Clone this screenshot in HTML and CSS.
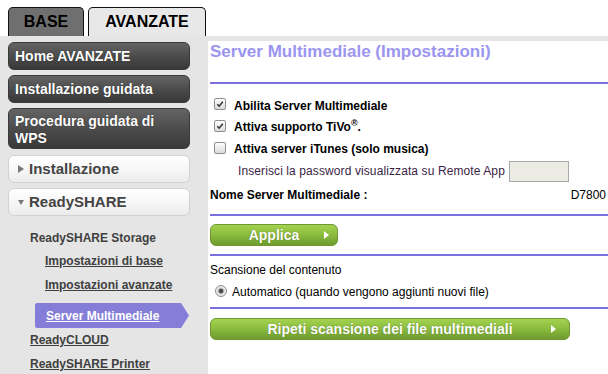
FILE: index.html
```html
<!DOCTYPE html>
<html lang="it">
<head>
    <meta charset="UTF-8">
    <title>Server Multimediale</title>
    <link rel="stylesheet" href="styles.css">
</head>
<body>
    <div class="tabs">
        <div class="tab tab-base">BASE</div>
        <div class="tab tab-adv">AVANZATE</div>
    </div>
    <div class="band"></div>
    <div class="main">
        <nav class="sidebar">
            <a class="btn-dark">Home AVANZATE</a>
            <a class="btn-dark">Installazione guidata</a>
            <a class="btn-dark btn-tall">Procedura guidata di WPS</a>
            <a class="btn-light"><span class="tri-right"></span>Installazione</a>
            <a class="btn-light"><span class="tri-down"></span>ReadySHARE</a>
            <div class="sub">
                <div class="sub-head">ReadySHARE Storage</div>
                <a class="sub-link indent">Impostazioni di base</a>
                <a class="sub-link indent">Impostazioni avanzate</a>
                <div class="sub-active"><a>Server Multimediale</a></div>
                <a class="sub-link">ReadyCLOUD</a>
                <a class="sub-link">ReadySHARE Printer</a>
            </div>
        </nav>

        <section class="content">
            <h1 class="title">Server Multimediale (Impostazioni)</h1>
            <div class="rule rule-top"></div>

            <div class="options">
                <div class="check-row">
                    <span class="check on"><svg viewBox="0 0 12 12"><path d="M2.8 6.2 L5 8.6 L9.4 3.2" fill="none" stroke="#333" stroke-width="1.8"/></svg></span>
                    <span class="label">Abilita Server Multimediale</span>
                </div>
                <div class="check-row">
                    <span class="check on"><svg viewBox="0 0 12 12"><path d="M2.8 6.2 L5 8.6 L9.4 3.2" fill="none" stroke="#333" stroke-width="1.8"/></svg></span>
                    <span class="label">Attiva supporto TiVo<sup>®</sup>.</span>
                </div>
                <div class="check-row">
                    <span class="check"></span>
                    <span class="label">Attiva server iTunes (solo musica)</span>
                </div>
                <div class="pass-row">
                    <span class="pass-text">Inserisci la password visualizzata su Remote App</span>
                    <span class="pass-box"></span>
                </div>
                <div class="name-row">
                    <span class="label">Nome Server Multimediale :</span>
                    <span>D7800</span>
                </div>
            </div>

            <div class="rule rule-mid"></div>
            <a class="green-btn btn-apply"><span></span><span class="btn-text">Applica</span><span class="arrow"></span></a>
            <div class="rule rule-mid"></div>

            <div class="scan-title">Scansione del contenuto</div>
            <div class="radio-row">
                <span class="radio"></span>
                <span>Automatico (quando vengono aggiunti nuovi file)</span>
            </div>
            <div class="rule rule-low"></div>
            <a class="green-btn btn-rescan"><span></span><span class="btn-text">Ripeti scansione dei file multimediali</span><span class="arrow"></span></a>
        </section>
    </div>
</body>
</html>
```

FILE: styles.css
```css
:root {
    --side-grey: #e5e5e5;
    --purple-line: #7a70e0;
    --purple-title: #9b95f0;
    --active: #857ed9;
}

html, body {
    margin: 0;
    height: 374px;
    overflow: hidden;
}

body {
    font-family: "Liberation Sans", Arial, sans-serif;
    background-color: white;
    color: #000;
    font-size: 12px;
}

a {
    cursor: pointer;
}

/* Tabs */
.tabs {
    display: flex;
    gap: 4px;
    height: 36px;
    padding: 7px 0 0 8px;
    box-sizing: border-box;
}

.tab {
    height: 29px;
    box-sizing: border-box;
    border: 1px solid #111;
    border-bottom: none;
    border-radius: 5px 5px 0 0;
    font-size: 16px;
    font-weight: bold;
    line-height: 28px;
    text-align: center;
}

.tab-base {
    width: 76px;
    background-color: #6f6f6f;
}

.tab-adv {
    width: 118px;
    background-color: #e8e8e8;
}

.band {
    height: 5px;
    background-color: var(--side-grey);
}

.main {
    display: flex;
    height: 333px;
}

/* Sidebar */
.sidebar {
    width: 208px;
    flex-shrink: 0;
    background-color: var(--side-grey);
    padding: 1px 0 0 8px;
    box-sizing: border-box;
    display: flex;
    flex-direction: column;
}

.sidebar > *, .sub > *, .content > *, .options > * {
    flex-shrink: 0;
}

.btn-dark {
    width: 182px;
    height: 28px;
    box-sizing: border-box;
    margin-bottom: 5px;
    padding: 0 6px;
    border: 1px solid #3a3a3a;
    border-radius: 6px;
    background: linear-gradient(#646464, #4a4a4a 55%, #383838);
    color: white;
    font-size: 14px;
    font-weight: bold;
    line-height: 26px;
    text-shadow: 0 0 1px rgba(0,0,0,0.6);
}

.btn-tall {
    height: 41px;
    line-height: 17px;
    padding-top: 4px;
    margin-bottom: 6px;
}

.btn-light {
    width: 182px;
    height: 28px;
    box-sizing: border-box;
    margin-bottom: 5px;
    padding-left: 9px;
    border: 1px solid #d2d2d2;
    border-radius: 6px;
    background: linear-gradient(#ffffff, #f7f7f7 50%, #ececec);
    color: #444;
    font-size: 15px;
    font-weight: bold;
    line-height: 26px;
    display: flex;
    align-items: center;
}

.tri-right {
    width: 0;
    height: 0;
    border-top: 4px solid transparent;
    border-bottom: 4px solid transparent;
    border-left: 6px solid #777;
    margin-right: 5px;
}

.tri-down {
    width: 0;
    height: 0;
    border-left: 3px solid transparent;
    border-right: 3px solid transparent;
    border-top: 5px solid #777;
    margin: 0 5px 0 0;
}

.sub {
    margin-top: 5px;
    display: flex;
    flex-direction: column;
    font-size: 12px;
    font-weight: bold;
    color: #404040;
}

.sub-head {
    height: 23px;
    line-height: 24px;
    padding-left: 22px;
}

.sub-link {
    height: 24px;
    line-height: 24px;
    padding-left: 22px;
    text-decoration: underline;
}

.sub-link.indent {
    padding-left: 37px;
}

.sub-active {
    width: 154px;
    height: 25px;
    margin: 6px 0 0 27px;
    padding-left: 11px;
    box-sizing: border-box;
    background-color: var(--active);
    border-radius: 2px 0 0 2px;
    clip-path: polygon(0 0, 146px 0, 100% 50%, 146px 100%, 0 100%);
    line-height: 26px;
}

.sub-active a {
    color: white;
    text-decoration: underline;
}

/* Content */
.content {
    flex: 1;
    padding-left: 2px;
    display: flex;
    flex-direction: column;
}

.title {
    margin: 1px 0 0 0;
    font-size: 17px;
    line-height: 20px;
    color: var(--purple-title);
}

.rule {
    height: 2px;
    background-color: var(--purple-line);
}

.rule-top { margin-top: 20px; }
.rule-mid { margin-top: 8px; }
.rule-low { margin-top: 4px; }

.options {
    margin-top: 11px;
    display: flex;
    flex-direction: column;
}

.check-row {
    height: 22px;
    display: flex;
    align-items: center;
    padding-left: 4px;
    gap: 8px;
}

.check-row:first-child {
    height: 21px;
}

.label {
    font-weight: bold;
}

.label sup {
    font-size: 9px;
    line-height: 0;
}

.check {
    width: 12px;
    height: 12px;
    box-sizing: border-box;
    margin-top: -3px;
    border: 1px solid #8e8f8f;
    border-radius: 2px;
    background: linear-gradient(#fdfdfd, #dcdcdc);
    display: flex;
}

.check svg {
    width: 10px;
    height: 10px;
}

.pass-row {
    height: 22px;
    display: flex;
    align-items: center;
    padding-left: 28px;
    gap: 4px;
    color: #3c1e46;
}

.pass-text {
    letter-spacing: 0.1px;
}

.pass-box {
    width: 60px;
    height: 21px;
    box-sizing: border-box;
    border: 1px solid #a9a9a9;
    background-color: #ebebe4;
}

.name-row {
    margin-top: 2px;
    height: 22px;
    line-height: 22px;
    display: flex;
    justify-content: space-between;
    padding-right: 2px;
}

.green-btn {
    margin-top: 8px;
    height: 22px;
    box-sizing: border-box;
    border: 1px solid #6f9834;
    border-radius: 6px;
    background: linear-gradient(#a3d24f, #8dbe40 45%, #6e9a2d);
    display: grid;
    grid-template-columns: 1fr auto 1fr;
    align-items: center;
    color: white;
    font-size: 14px;
    font-weight: bold;
    text-shadow: 0 0 1px rgba(40,60,10,0.6);
}

.btn-apply {
    width: 128px;
}

.btn-rescan {
    width: 360px;
    margin-top: 9px;
}

.arrow {
    justify-self: end;
    width: 0;
    height: 0;
    border-top: 4px solid transparent;
    border-bottom: 4px solid transparent;
    border-left: 5px solid white;
}

.btn-apply .arrow { margin-right: 8px; }
.btn-rescan .arrow { margin-right: 13px; }

.scan-title {
    margin-top: 3px;
    height: 22px;
    line-height: 22px;
}

.radio-row {
    height: 22px;
    display: flex;
    align-items: center;
    padding-left: 5px;
    gap: 5px;
}

.radio {
    width: 12px;
    height: 12px;
    box-sizing: border-box;
    margin-top: -2px;
    border: 1px solid #8e8f8f;
    border-radius: 50%;
    background: radial-gradient(circle, #444 0, #555 2px, #dcdcdc 3px, #f6f6f6 6px);
}
```
